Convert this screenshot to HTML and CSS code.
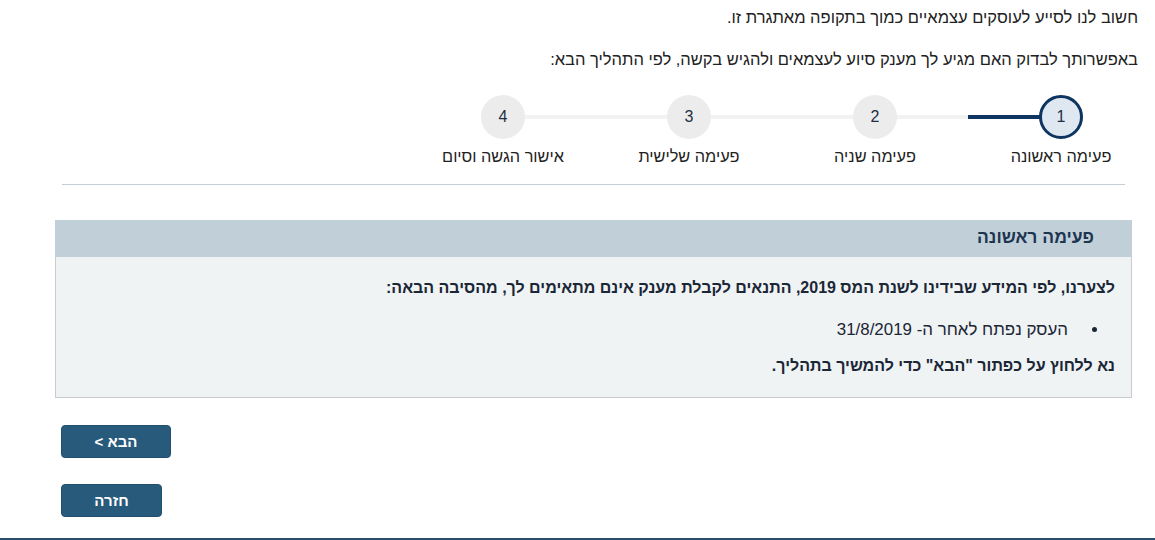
FILE: index.html
```html
<!DOCTYPE html>
<html lang="he" dir="rtl">
<head>
<meta charset="utf-8">
<title>פעימה ראשונה</title>
<link rel="stylesheet" href="styles.css">
</head>
<body>
<div class="page">
  <div class="intro">
    <p class="intro-line first">חשוב לנו לסייע לעוסקים עצמאיים כמוך בתקופה מאתגרת זו.</p>
    <p class="intro-line second">באפשרותך לבדוק האם מגיע לך מענק סיוע לעצמאים ולהגיש בקשה, לפי התהליך הבא:</p>
  </div>

  <ol class="stepper">
    <li class="step active"><span class="circle">1</span><span class="label">פעימה ראשונה</span></li>
    <li class="step"><span class="circle">2</span><span class="label">פעימה שניה</span></li>
    <li class="step"><span class="circle">3</span><span class="label">פעימה שלישית</span></li>
    <li class="step last"><span class="circle">4</span><span class="label">אישור הגשה וסיום</span></li>
  </ol>

  <div class="divider"></div>

  <section class="panel">
    <div class="panel-head">פעימה ראשונה</div>
    <div class="panel-body">
      <p class="strong">לצערנו, לפי המידע שבידינו לשנת המס 2019, התנאים לקבלת מענק אינם מתאימים לך, מהסיבה הבאה:</p>
      <ul class="reasons">
        <li>העסק נפתח לאחר ה- 31/8/2019</li>
      </ul>
      <p class="strong">נא ללחוץ על כפתור "הבא" כדי להמשיך בתהליך.</p>
    </div>
  </section>

  <div class="actions">
    <button class="btn btn-next" type="button">הבא &gt;</button>
    <button class="btn btn-back" type="button">חזרה</button>
  </div>
</div>
<div class="bottom-line"></div>
</body>
</html>
```

FILE: styles.css
```css
html, body {
  margin: 0;
  padding: 0;
  background: #ffffff;
}

body {
  font-family: "Liberation Sans", Arial, sans-serif;
  font-size: 16.5px;
  color: #222222;
  direction: rtl;
  height: 540px;
  position: relative;
  overflow: hidden;
}

.page {
  display: flex;
  flex-direction: column;
}

.intro {
  padding-right: 17px;
}

.intro-line {
  margin: 0;
  line-height: 18px;
}

.intro-line.first {
  margin-top: 8px;
}

.intro-line.second {
  margin-top: 24px;
}

.stepper {
  list-style: none;
  margin: 27px 0 0 0;
  padding: 0 1px 0 0;
  display: flex;
  flex-direction: row;
}

.step {
  width: 186px;
  display: flex;
  flex-direction: column;
  align-items: center;
  position: relative;
}

.step::before {
  content: "";
  position: absolute;
  top: 20px;
  left: -50%;
  width: 100%;
  height: 4px;
  background: #f2f2f2;
  z-index: 0;
}

.step.last::before {
  display: none;
}

.step.active::before {
  background: linear-gradient(to right, #f2f2f2 0, #f2f2f2 50%, #0e3461 50%, #0e3461 100%);
}

.circle {
  position: relative;
  z-index: 1;
  width: 44px;
  height: 44px;
  box-sizing: border-box;
  border-radius: 50%;
  background: #ececec;
  color: #1e2f45;
  font-size: 16px;
  display: flex;
  align-items: center;
  justify-content: center;
}

.step.active .circle {
  background: #dfe8f0;
  border: 3px solid #0e3461;
}

.label {
  margin-top: 8px;
  line-height: 18px;
  font-size: 16.3px;
  color: #222222;
  white-space: nowrap;
}

.divider {
  margin: 19px 30px 0 62px;
  height: 1px;
  background: #c5ced6;
}

.panel {
  margin: 35px 23px 0 55px;
}

.panel-head {
  background: #c1d0d8;
  height: 37px;
  line-height: 34px;
  padding-right: 38px;
  font-weight: bold;
  font-size: 17.5px;
  color: #1d3550;
}

.panel-body {
  background: #eff3f4;
  border: 1px solid #c6ccd2;
  border-top: none;
  padding: 22px 16px 22px 16px;
  color: #1b2636;
}

.strong {
  margin: 0;
  font-weight: bold;
  font-size: 16px;
  line-height: 18px;
}

.reasons {
  margin: 24px 0 0 0;
  padding: 0 35px 0 0;
  line-height: 18px;
  font-size: 16.9px;
}

.reasons li {
  padding-right: 12px;
}

.reasons + .strong {
  margin-top: 18px;
}

.actions {
  display: flex;
  flex-direction: column;
  align-items: flex-end;
  margin: 27px 0 0 0;
  padding-left: 61px;
}

.btn {
  font-family: "Liberation Sans", Arial, sans-serif;
  font-size: 15px;
  font-weight: bold;
  color: #ffffff;
  background: #285a7c;
  border: 1px solid #234f6e;
  border-radius: 4px;
  height: 33px;
  padding: 0;
  cursor: pointer;
}

.btn-next {
  width: 110px;
}

.btn-back {
  width: 101px;
  margin-top: 26px;
}

.bottom-line {
  position: absolute;
  left: 0;
  right: 0;
  bottom: 0;
  height: 2px;
  background: #2a4f6e;
}
```
